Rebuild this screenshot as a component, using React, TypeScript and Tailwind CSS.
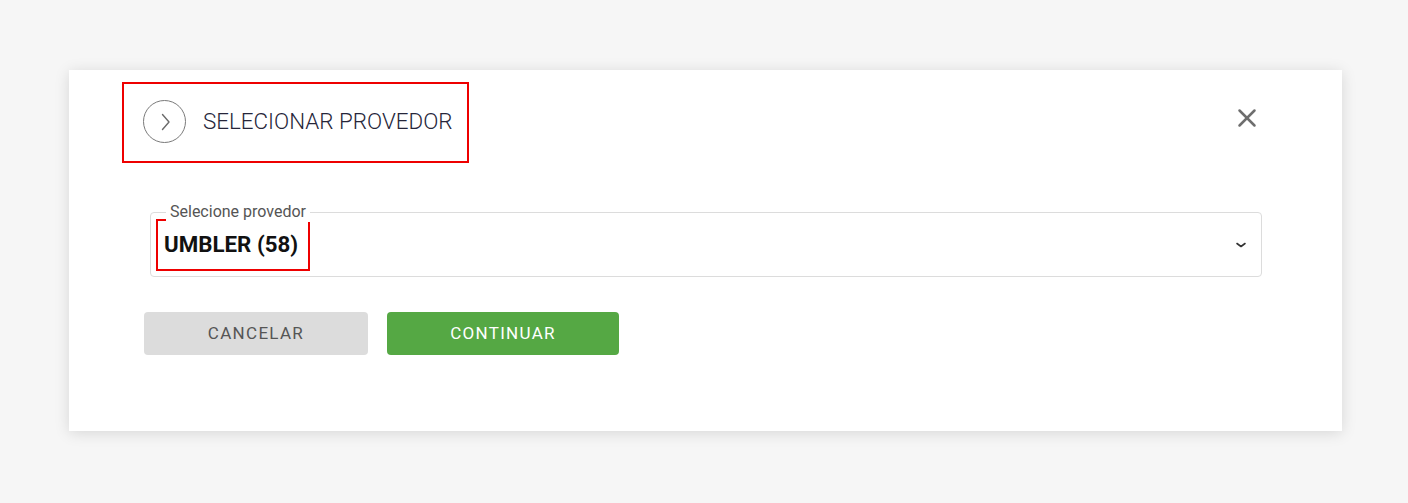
import { X } from "lucide-react"

const App = () => {
  return (
    <div className="min-h-[503px] w-full bg-[#f6f6f6] pt-[70px] pl-[69px] font-['Roboto',sans-serif]">
      <div className="w-[1273px] h-[361px] bg-white shadow-[0_2px_14px_rgba(0,0,0,0.13)] pt-[12px]">
        {/* Header */}
        <div className="flex items-start justify-between pl-[53px] pr-[80px]">
          <div className="flex items-center h-[81px] w-[347px] border-2 border-[#ee0000] pl-[19px] pb-[2px]">
            <div className="flex items-center justify-center w-[43px] h-[43px] rounded-full border-[1.5px] border-[#7a7a7a]">
              <svg width="12" height="18" viewBox="0 0 12 18" fill="none" className="ml-[2px]">
                <path d="M2.5 1.5 L9 9 L2.5 16.5" stroke="#6b6b6b" strokeWidth="1.4" strokeLinecap="round" strokeLinejoin="round" />
              </svg>
            </div>
            <span className="ml-[17px] text-[22.4px] font-light text-[#26263a]">SELECIONAR PROVEDOR</span>
          </div>
          <button className="mt-[21px] text-[#6e6e6e]">
            <X size={30} strokeWidth={2} />
          </button>
        </div>

        {/* Select */}
        <div className="relative mt-[49px] ml-[81px] w-[1112px] h-[65px] border border-[#dcdcdc] rounded-[4px]">
          <span className="absolute -top-[11px] left-[15px] bg-white px-[4px] text-[16px] leading-[20px] text-[#555555]">
            Selecione provedor
          </span>
          <div className="flex items-center justify-between h-full pr-[14px]">
            <div className="ml-[5px] flex items-center h-[52px] w-[154px] border-2 border-[#ee0000] pl-[6px]">
              <span className="text-[22.3px] font-bold text-[#111111]">UMBLER (58)</span>
            </div>
            <svg width="12" height="8" viewBox="0 0 12 8" fill="none" className="mt-[1px]">
              <path d="M2 2.5 L6 5.5 L10 2.5" stroke="#333333" strokeWidth="1.6" strokeLinecap="round" strokeLinejoin="round" />
            </svg>
          </div>
        </div>

        {/* Actions */}
        <div className="flex items-center gap-[19px] mt-[35px] ml-[75px]">
          <button className="w-[224px] h-[43px] rounded-[4px] bg-[#dcdcdc] text-[17px] tracking-[1.3px] text-[#555555]">
            CANCELAR
          </button>
          <button className="w-[232px] h-[43px] rounded-[4px] bg-[#55a844] text-[17px] tracking-[1.3px] text-white">
            CONTINUAR
          </button>
        </div>
      </div>
    </div>
  )
}

export default App
